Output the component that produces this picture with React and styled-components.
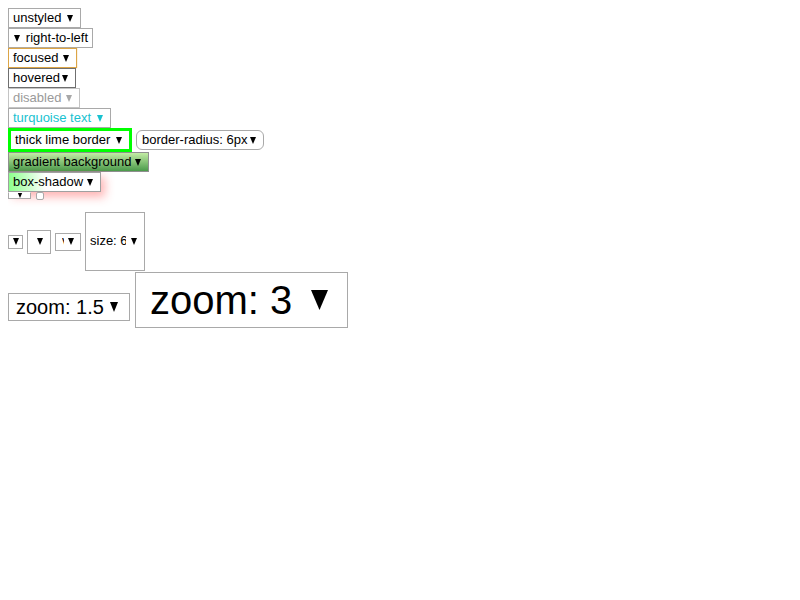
import styled, { createGlobalStyle } from "styled-components";

const GlobalStyle = createGlobalStyle`
  body {
    margin: 8px;
    background: #fff;
    font-family: "Liberation Sans", Arial, sans-serif;
  }
`;

// the little drop-down triangle
const Arrow = ({ w = 6, h = 7, color = "#000" }) => (
  <svg width={w} height={h} viewBox={`0 0 ${w} ${h}`} style={{ flex: "none" }}>
    <polygon points={`0,0 ${w},0 ${w / 2},${h}`} fill={color} />
  </svg>
);

const Page = styled.div`
  display: flex;
  flex-direction: column;
  align-items: flex-start;
`;

const Line = styled.div`
  display: flex;
  align-items: ${(p) => p.$align || "center"};
  gap: ${(p) => (p.$gap === undefined ? 4 : p.$gap)}px;
  margin-top: ${(p) => p.$mt || 0}px;
`;

const Select = styled.div`
  display: flex;
  flex: none;
  flex-direction: ${(p) => (p.$rtl ? "row-reverse" : "row")};
  align-items: center;
  justify-content: ${(p) => p.$justify || "space-between"};
  box-sizing: border-box;
  width: ${(p) => p.$w}px;
  height: ${(p) => p.$h || 20}px;
  padding: 0 ${(p) => (p.$pr === undefined ? 7 : p.$pr)}px 0
    ${(p) => (p.$pl === undefined ? 4 : p.$pl)}px;
  border: ${(p) => p.$bw || 1}px solid ${(p) => p.$bc || "#a9a9a9"};
  border-radius: ${(p) => p.$radius || 0}px;
  background: ${(p) => p.$bg || "#fff"};
  box-shadow: ${(p) => p.$shadow || "none"};
  color: ${(p) => p.$color || "#000"};
  font-size: ${(p) => p.$fs || 13}px;
  line-height: 1.15;
  white-space: nowrap;
  overflow: hidden;
  margin-bottom: ${(p) => p.$mb || 0}px;
`;

const Label = styled.span`
  flex: none;
`;

const Clipped = styled.span`
  display: block;
  overflow: hidden;
  width: ${(p) => p.$w}px;
  flex: none;
`;

const Dot = styled.div`
  box-sizing: border-box;
  width: 8px;
  height: 8px;
  border: 1px solid #a9a9a9;
  border-radius: 2px;
  background: #fff;
`;

const Flat = styled.div`
  box-sizing: border-box;
  width: 23px;
  height: 7px;
  border: 1px solid #a9a9a9;
  border-top-color: transparent;
  background: #fff;
  overflow: hidden;
  display: flex;
  justify-content: center;
  align-items: flex-end;
`;

export default function App() {
  return (
    <>
      <GlobalStyle />
      <Page>
        <Select $w={73}>
          <Label>unstyled</Label>
          <Arrow />
        </Select>
        <Select $w={85} $rtl $pl={5} $pr={4}>
          <Label>right-to-left</Label>
          <Arrow />
        </Select>
        <Select $w={69} $bc="#dca546" $shadow="0 0 1px #e8b060">
          <Label>focused</Label>
          <Arrow />
        </Select>
        <Select $w={68} $bc="#6f6f6f">
          <Label>hovered</Label>
          <Arrow />
        </Select>
        <Select $w={72} $bc="#c4c4c4" $color="#9a9a9a">
          <Label>disabled</Label>
          <Arrow color="#a8a8a8" />
        </Select>
        <Select $w={103} $color="#18c2d0">
          <Label>turquoise text</Label>
          <Arrow color="#18c2d0" />
        </Select>
        <Line>
          <Select $w={124} $h={24} $bw={3} $bc="#00ff00">
            <Label>thick lime border</Label>
            <Arrow />
          </Select>
          <Select $w={128} $radius={6} $pl={5}>
            <Label>border-radius: 6px</Label>
            <Arrow />
          </Select>
        </Line>
        <Select $w={141} $bc="#8f8f8f" $bg="linear-gradient(#c2eba4, #4b9a4b)">
          <Label>gradient background</Label>
          <Arrow />
        </Select>
        <Select
          $w={93}
          $bc="#a0a0a0"
          $bg="linear-gradient(90deg, #8dff8d 0%, #ffffff 40%)"
          $shadow="4px 5px 10px rgba(255, 40, 40, 0.35)"
        >
          <Label>box-shadow</Label>
          <Arrow />
        </Select>
        <Line $gap={5} $align="flex-start">
          <Flat>
            <Arrow />
          </Flat>
          <Dot />
        </Line>
        <Line $mt={12}>
          <Select $w={15} $h={14} $pl={4} $pr={4}>
            <Arrow />
          </Select>
          <Select $w={24} $h={24} $pl={6} $pr={7} $justify="flex-end">
            <Arrow />
          </Select>
          <Select $w={26} $h={18} $pl={6} $pr={6}>
            <Clipped $w={2}>v</Clipped>
            <Arrow />
          </Select>
          <Select $w={60} $h={59} $pl={4} $pr={7}>
            <Clipped $w={36}>size: 6</Clipped>
            <Arrow />
          </Select>
        </Line>
        <Line $gap={5} $align="flex-end" $mt={1}>
          <Select $w={122} $h={28} $fs={20} $pl={7} $pr={11} $mb={7}>
            <Label>zoom: 1.5</Label>
            <Arrow w={8} h={10} />
          </Select>
          <Select $w={213} $h={56} $fs={40} $pl={14} $pr={19}>
            <Label>zoom: 3</Label>
            <Arrow w={17} h={20} />
          </Select>
        </Line>
      </Page>
    </>
  );
}
